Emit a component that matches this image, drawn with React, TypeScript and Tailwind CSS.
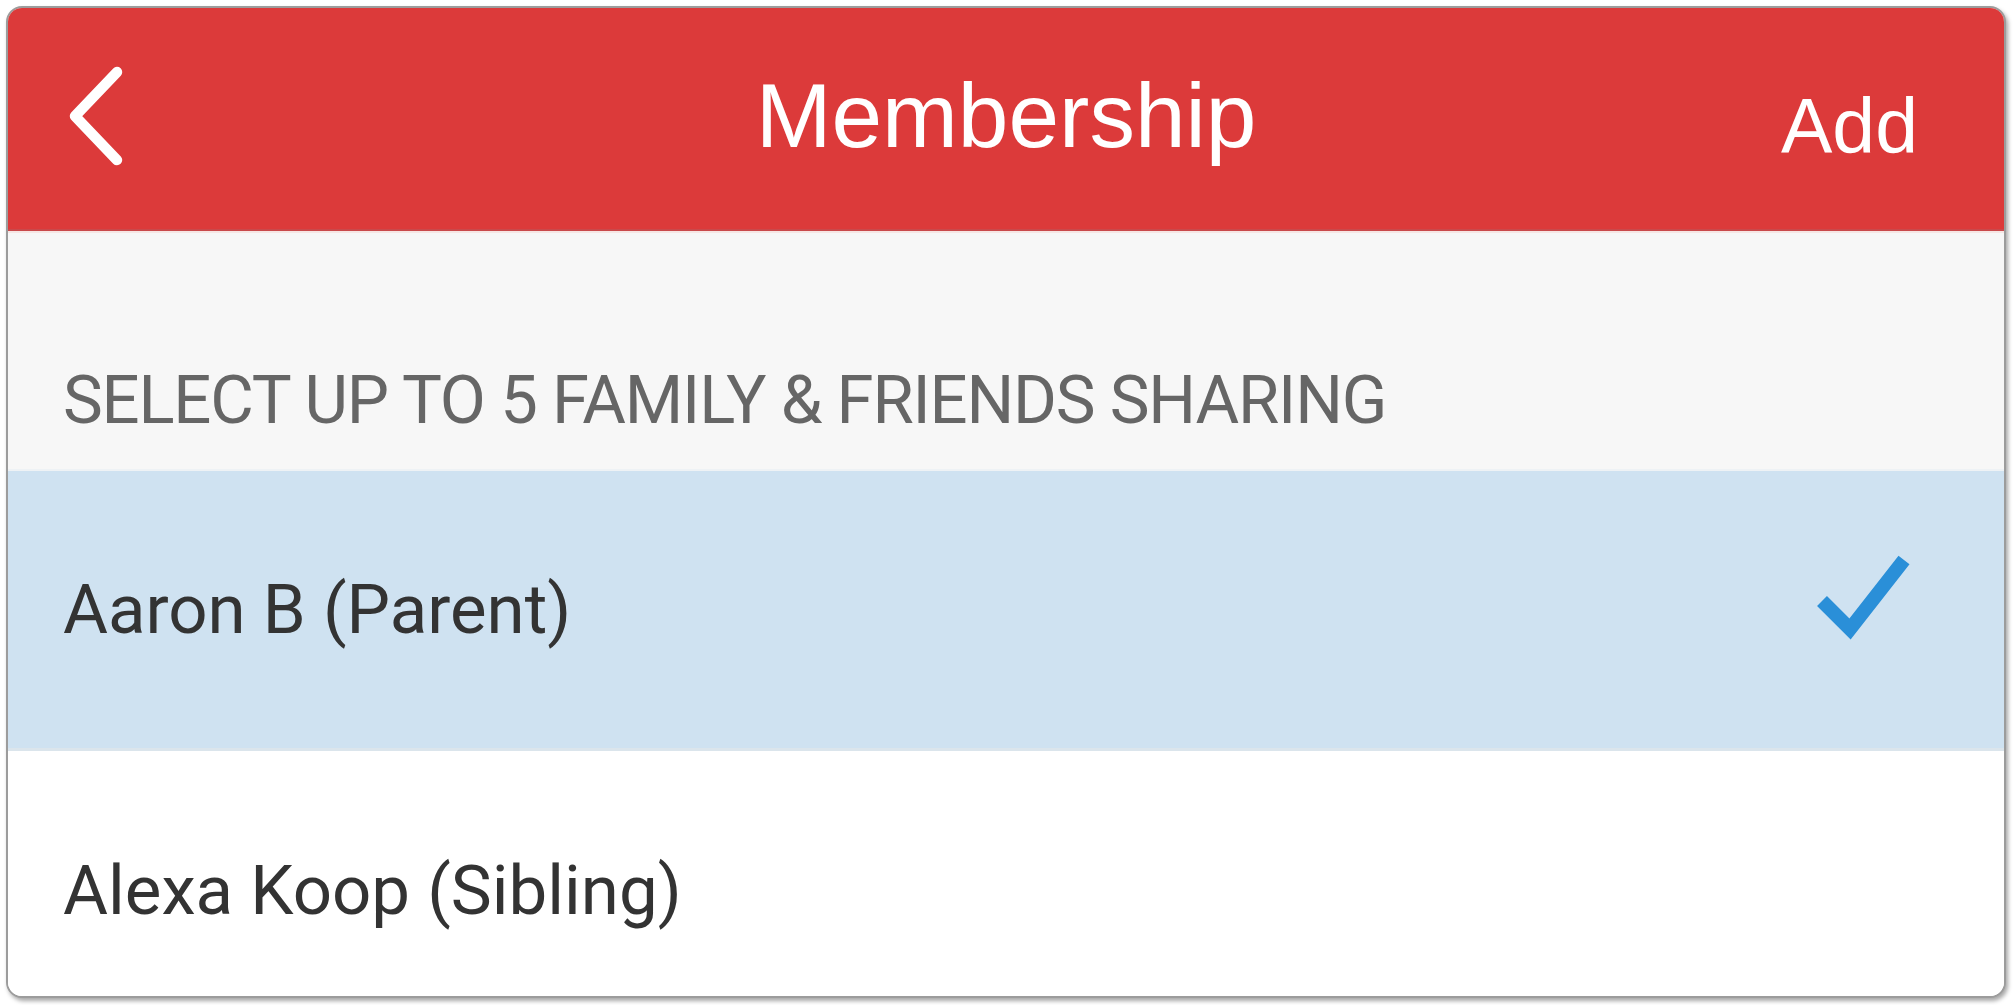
const members = [
  { name: "Aaron B (Parent)", selected: true },
  { name: "Alexa Koop (Sibling)", selected: false },
];

function BackChevron() {
  return (
    <svg width="60" height="110" viewBox="0 0 60 110" fill="none">
      <path
        d="M49 11 L7 55 L49 99"
        stroke="white"
        strokeWidth="10.5"
        strokeLinecap="round"
        strokeLinejoin="round"
      />
    </svg>
  );
}

function CheckMark() {
  return (
    <svg width="100" height="94" viewBox="0 0 100 94" fill="none">
      <path
        d="M7 52 L35 80 L89 11"
        stroke="#2a8fd8"
        strokeWidth="14"
        strokeLinecap="butt"
        strokeLinejoin="miter"
      />
    </svg>
  );
}

export default function App() {
  return (
    <div className="w-[2013px] h-[1005px] bg-white pt-[6px] pl-[6px] pr-[7px]">
      <div className="h-[992px] rounded-[16px] border-2 border-[#9c9c9c] overflow-hidden bg-white shadow-[2px_3px_4px_rgba(0,0,0,0.35)] flex flex-col">
        {/* header */}
        <div className="h-[223px] shrink-0 bg-[#dc3a3a] border-b-2 border-[#c9494b] grid grid-cols-3 items-center font-['Liberation_Sans',Arial,sans-serif] text-white">
          <div className="pl-[60px] mb-[6px]">
            <BackChevron />
          </div>
          <div className="text-center text-[91px] leading-none mb-[6px]">Membership</div>
          <div className="text-right pr-[86px] text-[77px] leading-none mt-[16px]">Add</div>
        </div>
        <div className="h-[2px] shrink-0 bg-[#f6e6e4]" />

        {/* section title */}
        <div className="h-[238px] shrink-0 bg-[#f7f7f7] flex items-end pl-[55px] pb-[29px] border-b-2 border-[#eef2f5]">
          <span className="font-['Roboto',sans-serif] text-[67px] leading-[80px] tracking-[-1.2px] text-[#666666]">
            SELECT UP TO 5 FAMILY &amp; FRIENDS SHARING
          </span>
        </div>

        {/* rows */}
        {members.map((m) => (
          <div
            key={m.name}
            className={
              m.selected
                ? "h-[280px] shrink-0 bg-[#cfe2f1] border-b-[3px] border-[#dbe5ec] flex items-center justify-between pl-[55px] pr-[89px]"
                : "h-[279px] shrink-0 bg-white flex items-center justify-between pl-[55px] pr-[89px]"
            }
          >
            <span className="font-['Roboto',sans-serif] text-[69px] leading-[80px] text-[#333333]">
              {m.name}
            </span>
            {m.selected && (
              <div className="mb-[28px]">
                <CheckMark />
              </div>
            )}
          </div>
        ))}
      </div>
    </div>
  );
}
